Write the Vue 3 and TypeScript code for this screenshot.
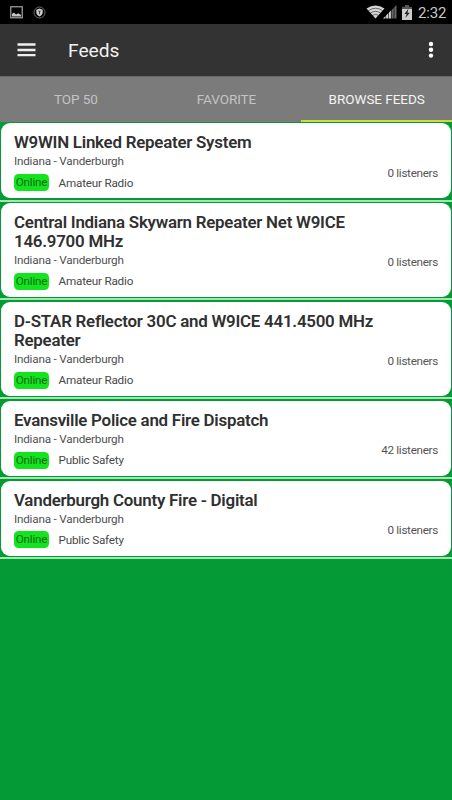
<script setup lang="ts">
interface Feed {
  title: string[]
  location: string
  category: string
  listeners: number
}

const tabs: string[] = ['TOP 50', 'FAVORITE', 'BROWSE FEEDS']
const activeTab = 'BROWSE FEEDS'

const feeds: Feed[] = [
  { title: ['W9WIN Linked Repeater System'], location: 'Indiana - Vanderburgh', category: 'Amateur Radio', listeners: 0 },
  { title: ['Central Indiana Skywarn Repeater Net W9ICE', '146.9700 MHz'], location: 'Indiana - Vanderburgh', category: 'Amateur Radio', listeners: 0 },
  { title: ['D-STAR Reflector 30C and W9ICE 441.4500 MHz', 'Repeater'], location: 'Indiana - Vanderburgh', category: 'Amateur Radio', listeners: 0 },
  { title: ['Evansville Police and Fire Dispatch'], location: 'Indiana - Vanderburgh', category: 'Public Safety', listeners: 42 },
  { title: ['Vanderburgh County Fire - Digital'], location: 'Indiana - Vanderburgh', category: 'Public Safety', listeners: 0 },
]
</script>

<template>
  <div class="screen">
    <div class="status">
      <div class="notes">
        <svg width="13" height="13" viewBox="0 0 13 13">
          <rect x="0.75" y="0.75" width="11.5" height="11" fill="none" stroke="#999" stroke-width="1.3" />
          <path d="M2 10.5V8l2-1.6 2 2L8.200 7.200 11 9v1.500z" fill="#c4c4c4" />
        </svg>
        <svg width="13" height="13" viewBox="0 0 13 13">
          <circle cx="6.500" cy="6.500" r="5.500" fill="none" stroke="#6c6c6c" stroke-width="1" />
          <path d="M6.500 2.600 9.700 3.700V6.200C9.700 8.200 8.300 9.600 6.500 10.500 4.700 9.600 3.300 8.200 3.300 6.200V3.700z" fill="#ccc" />
          <path d="M5.200 4.700h2.600L7 6.500v1.800H6V6.500z" fill="#444" />
        </svg>
      </div>
      <div class="system">
        <svg class="wifi" width="19" height="14" viewBox="0 0 19 14">
          <path d="M9.500 13.500 0.500 3.500Q9.500-2.500 18.500 3.500z" fill="#d4d4d4" />
          <path d="M2.500 5.500Q9.500 1 16.500 5.500M4.500 8Q9.500 4.700 14.500 8M6.500 10.300Q9.500 8.500 12.500 10.300" fill="none" stroke="#222" stroke-width="0.6" />
        </svg>
        <svg class="signal" width="14" height="14" viewBox="0 0 14 14">
          <path d="M0 13.500 8.500 5V13.500z" fill="#d4d4d4" />
          <path d="M8.500 5 13.500 0V13.500H8.500z" fill="#666" />
          <path d="M2.700 9V14M5.500 6V14M8.300 3V14M11 1V14" stroke="#000" stroke-width="0.6" />
        </svg>
        <svg class="battery" width="10" height="15" viewBox="0 0 10 15">
          <path d="M3 0h4v1.800h3V5H0V1.800h3z" fill="#555" />
          <path d="M0 4h10v11H0z" fill="#ccc" />
          <path d="M6.500 3.500 2.500 9h2.200L3.300 13 7.800 7.800H5.500z" fill="#222" />
        </svg>
        <span class="clock">2:32</span>
      </div>
    </div>

    <header class="toolbar">
      <svg width="19" height="14" viewBox="0 0 19 14">
        <path d="M0.500 1.500h18M0.500 7h18M0.500 12.200h18" stroke="#eee" stroke-width="2.300" />
      </svg>
      <h1>Feeds</h1>
      <svg class="more" width="6" height="18" viewBox="0 0 6 18">
        <circle cx="3" cy="3" r="2.200" fill="#fff" />
        <circle cx="3" cy="8.800" r="2.200" fill="#fff" />
        <circle cx="3" cy="14.600" r="2.200" fill="#fff" />
      </svg>
    </header>

    <nav class="tabs">
      <div v-for="tab in tabs" :key="tab" class="tab" :class="{ active: tab === activeTab }">
        <span>{{ tab }}</span>
      </div>
    </nav>

    <main class="list">
      <div v-for="feed in feeds" :key="feed.title[0]" class="row">
        <article class="card">
          <div class="info">
            <h2><span v-for="line in feed.title" :key="line">{{ line }}</span></h2>
            <p class="location">{{ feed.location }}</p>
            <div class="meta">
              <span class="badge">Online</span>
              <span class="category">{{ feed.category }}</span>
            </div>
          </div>
          <span class="listeners">{{ feed.listeners }} listeners</span>
        </article>
      </div>
    </main>
  </div>
</template>

<style>
body {
  background: #049a35;
}
</style>

<style scoped>
.screen {
  width: 452px;
  height: 800px;
  overflow: hidden;
  background: #049a35;
  font-family: Roboto, "Liberation Sans", sans-serif;
  color: #333;
}
.status {
  height: 24px;
  box-sizing: border-box;
  padding: 0 6px 0 10px;
  background: #000;
  display: flex;
  justify-content: space-between;
}
.notes {
  display: flex;
  align-items: center;
  gap: 10px;
}
.system {
  display: flex;
  align-items: center;
}
.signal {
  margin-left: -2px;
}
.battery {
  margin: 0 6px 0 5px;
}
.clock {
  width: 28px;
  padding-top: 2px;
  font-size: 15px;
  line-height: 24px;
  letter-spacing: -0.2px;
  color: #c8c8c8;
  white-space: nowrap;
}
.toolbar {
  height: 52px;
  box-sizing: border-box;
  padding: 0 18px 0 17px;
  background: #333;
  display: flex;
  align-items: center;
}
h1 {
  margin: 0 0 0 32px;
  padding-top: 1px;
  font-size: 19.200px;
  font-weight: 400;
  line-height: 24px;
  color: #f2f2f2;
}
.more {
  margin-left: auto;
}
.tabs {
  height: 45.800px;
  display: grid;
  grid-template-columns: repeat(3, 1fr);
  background: #7b7b7b;
  border-top: 1px solid #686868;
  box-sizing: border-box;
}
.tab {
  display: flex;
  align-items: center;
  justify-content: center;
  box-sizing: border-box;
  padding-left: 1px;
  font-size: 13.500px;
  letter-spacing: -0.050px;
  color: #c3c3c3;
  white-space: nowrap;
}
.active {
  color: #f4f4f4;
  border-bottom: 2px solid #cddc39;
  padding-top: 2px;
  padding-left: 0;
}
.row {
  box-sizing: border-box;
  padding: 1.700px 1px 1.200px;
  border-bottom: 2px solid #a0e8ab;
}
.card {
  display: flex;
  justify-content: space-between;
  align-items: center;
  box-sizing: border-box;
  padding: 9.800px 13px 7.300px;
  border-radius: 9px;
  background: #fff;
}
.info {
  white-space: nowrap;
}
h2 {
  margin: 0;
  font-size: 16.900px;
  font-weight: 600;
  line-height: 18.900px;
  letter-spacing: -0.240px;
  color: #303030;
}
h2 span {
  display: block;
}
.location {
  margin: 1.100px 0 4.900px;
  font-size: 11.700px;
  line-height: 16px;
  letter-spacing: -0.200px;
  color: #505050;
}
.meta {
  display: flex;
  align-items: center;
  height: 17px;
  font-size: 11.700px;
  letter-spacing: -0.200px;
}
.badge {
  width: 35px;
  height: 17px;
  border-radius: 4.500px;
  background: #12e51f;
  color: #176817;
  text-align: center;
  line-height: 17px;
}
.category {
  margin-left: 9.500px;
  color: #484848;
}
.listeners {
  margin-top: 21px;
  font-size: 11.700px;
  line-height: 16px;
  letter-spacing: -0.300px;
  color: #555;
  white-space: nowrap;
}
</style>
